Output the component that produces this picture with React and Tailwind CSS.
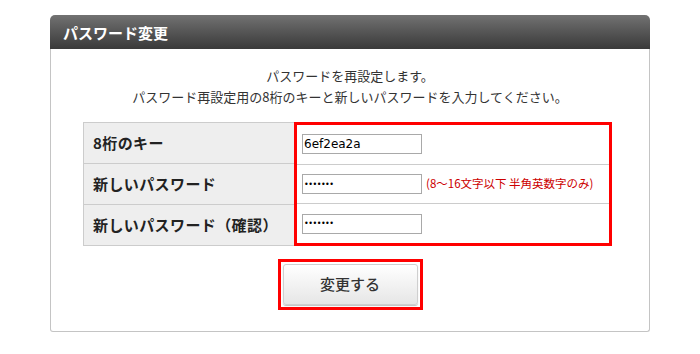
import React from "react";

const jp = { fontFamily: '"Noto Sans CJK JP", "Noto Sans", sans-serif' };

const rows = [
  { label: "8桁のキー", type: "text", value: "6ef2ea2a" },
  { label: "新しいパスワード", type: "password", value: "1234567", hint: "(8～16文字以下 半角英数字のみ)" },
  { label: "新しいパスワード（確認）", type: "password", value: "1234567" },
];

export default function App() {
  return (
    <div className="w-[700px] h-[354px] bg-white pt-[15px]" style={jp}>
      <div className="ml-[50px] w-[600px]">
        {/* header */}
        <div className="h-[34px] rounded-t-[5px] bg-gradient-to-b from-[#727272] to-[#3a3a3a] flex items-center pl-[13px]">
          <h2 className="text-white font-bold text-[15px] leading-none">パスワード変更</h2>
        </div>

        <div className="border border-t-0 border-[#c4c4c4] rounded-b-[3px] pt-[16px] pb-[21px]">
          <p className="text-center text-[13px] leading-[21px] text-[#333]">
            パスワードを再設定します。
            <br />
            パスワード再設定用の8桁のキーと新しいパスワードを入力してください。
          </p>

          <div className="mt-[15px] ml-[32px] w-[529px] flex">
            <div className="w-[211px] border-t border-l border-[#cccccc] flex flex-col">
              {rows.map((r) => (
                <div key={r.label} className="h-[41px] bg-[#eeeeee] border-b border-[#cccccc] flex items-center pl-[9px]">
                  <span className="font-bold text-[15px] tracking-[0.4px] text-[#222]">{r.label}</span>
                </div>
              ))}
            </div>
            <div className="flex-1 border-[3px] border-[#ff0000] flex flex-col">
              {rows.map((r, i) => (
                <div
                  key={r.label}
                  className={`flex-1 flex items-center pl-[5px] ${i < rows.length - 1 ? "border-b border-[#cccccc]" : ""}`}
                >
                  <input
                    type={r.type}
                    defaultValue={r.value}
                    className={`w-[120px] h-[20px] border border-[#a9a9a9] px-[1px] text-black outline-none ${r.type === "password" ? "text-[8px] tracking-[-0.5px]" : "text-[12px]"}`}
                    style={{ fontFamily: '"DejaVu Sans", sans-serif' }}
                  />
                  {r.hint && (
                    <span className="ml-[4px] text-[11.5px] text-[#cc0000]">{r.hint}</span>
                  )}
                </div>
              ))}
            </div>
          </div>

          <div className="mt-[13px] flex justify-center">
            <div className="border-[3px] border-[#ff0000] p-[2px]">
              <button className="w-[135px] h-[41px] rounded-[3px] border border-[#cfcfcf] bg-gradient-to-b from-[#ffffff] to-[#e6e6e6] shadow-[0_1px_1px_rgba(0,0,0,0.25)] text-[15px] text-[#333] font-medium">
                変更する
              </button>
            </div>
          </div>
        </div>
      </div>
    </div>
  );
}
